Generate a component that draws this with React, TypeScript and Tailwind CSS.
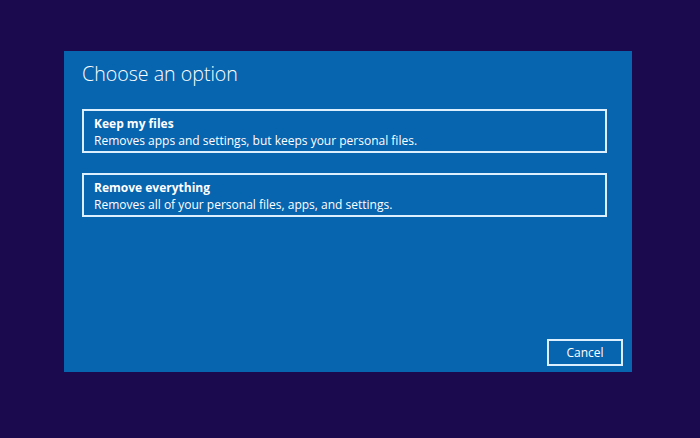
export default function App() {
  const options = [
    {
      title: "Keep my files",
      desc: "Removes apps and settings, but keeps your personal files.",
    },
    {
      title: "Remove everything",
      desc: "Removes all of your personal files, apps, and settings.",
    },
  ];

  return (
    <div
      className="h-[438px] w-[700px] bg-[#1b0a4d] pl-[64px] pt-[51px]"
      style={{ fontFamily: '"Open Sans", "Noto Sans", sans-serif' }}
    >
      <div className="flex h-[321px] w-[568px] flex-col bg-[#0764af] pb-[6px] pl-[18px] pr-[9px] pt-[9px] text-white">
        <h1 className="text-[19.6px] font-light leading-[28px] text-white">Choose an option</h1>
        {/* option list */}
        <div className="mt-[21px] flex w-[525px] flex-col gap-[20px]">
          {options.map((o) => (
            <button
              key={o.title}
              className="flex h-[44px] flex-col justify-center border-2 border-[#dcefff] px-[10px] pt-[2px] text-left"
            >
              <span className="text-[12px] font-bold leading-[16px]">{o.title}</span>
              <span className="text-[12px] leading-[17px]">{o.desc}</span>
            </button>
          ))}
        </div>
        <div className="flex-1" />
        <div className="flex justify-end">
          <button className="h-[27px] w-[76px] border-2 border-[#dcefff] pt-[1px] text-[12px] leading-none">
            Cancel
          </button>
        </div>
      </div>
    </div>
  );
}
